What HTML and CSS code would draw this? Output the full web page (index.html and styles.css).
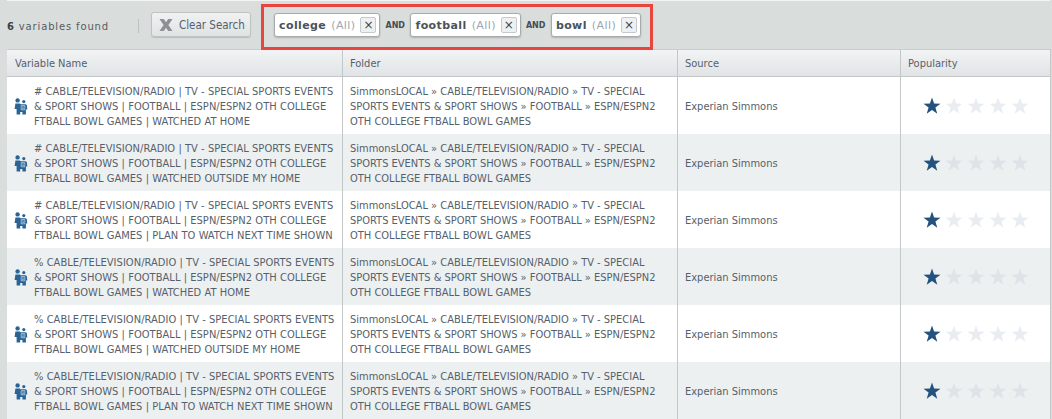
FILE: index.html
```html
<!DOCTYPE html>
<html lang="en">
<head>
<meta charset="utf-8">
<title>Variables</title>
<link rel="stylesheet" href="styles.css">
</head>
<body>
<div class="page">
  <div class="topline"></div>
  <div class="toolbar">
    <div class="count"><b>6</b> variables found</div>
    <div class="sep"></div>
    <button class="clear"><svg class="clear-x" viewBox="0 0 14 14" width="14" height="14"><path d="M.5 1h4.3L7 4.2 9.2 1h4.3L9.4 7l4.1 6H9.2L7 9.8 4.8 13H.5l4.1-6z"/></svg>Clear Search</button>
    <div class="terms">
      <div class="chip"><b>college</b><span class="all">(All)</span><span class="x">×</span></div>
      <span class="and">AND</span>
      <div class="chip"><b>football</b><span class="all">(All)</span><span class="x">×</span></div>
      <span class="and">AND</span>
      <div class="chip"><b>bowl</b><span class="all">(All)</span><span class="x">×</span></div>
    </div>
  </div>
  <div class="table">
    <div class="row head">
      <div class="cell">Variable Name</div><div class="cell">Folder</div><div class="cell">Source</div><div class="cell">Popularity</div>
    </div>
    <div class="row">
      <div class="cell name"><svg class="person" viewBox="0 0 14 17"><use href="#p"/></svg><span># CABLE/TELEVISION/RADIO | TV - SPECIAL SPORTS EVENTS &amp; SPORT SHOWS | FOOTBALL | ESPN/ESPN2 OTH COLLEGE FTBALL BOWL GAMES | WATCHED AT HOME</span></div>
      <div class="cell">SimmonsLOCAL » CABLE/TELEVISION/RADIO » TV - SPECIAL SPORTS EVENTS &amp; SPORT SHOWS » FOOTBALL » ESPN/ESPN2 OTH COLLEGE FTBALL BOWL GAMES</div>
      <div class="cell">Experian Simmons</div>
      <div class="cell stars"><svg viewBox="0 0 22 20" class="star on"><use href="#s"/></svg><svg viewBox="0 0 22 20" class="star"><use href="#s"/></svg><svg viewBox="0 0 22 20" class="star"><use href="#s"/></svg><svg viewBox="0 0 22 20" class="star"><use href="#s"/></svg><svg viewBox="0 0 22 20" class="star"><use href="#s"/></svg></div>
    </div>
    <div class="row">
      <div class="cell name"><svg class="person" viewBox="0 0 14 17"><use href="#p"/></svg><span># CABLE/TELEVISION/RADIO | TV - SPECIAL SPORTS EVENTS &amp; SPORT SHOWS | FOOTBALL | ESPN/ESPN2 OTH COLLEGE FTBALL BOWL GAMES | WATCHED OUTSIDE MY HOME</span></div>
      <div class="cell">SimmonsLOCAL » CABLE/TELEVISION/RADIO » TV - SPECIAL SPORTS EVENTS &amp; SPORT SHOWS » FOOTBALL » ESPN/ESPN2 OTH COLLEGE FTBALL BOWL GAMES</div>
      <div class="cell">Experian Simmons</div>
      <div class="cell stars"><svg viewBox="0 0 22 20" class="star on"><use href="#s"/></svg><svg viewBox="0 0 22 20" class="star"><use href="#s"/></svg><svg viewBox="0 0 22 20" class="star"><use href="#s"/></svg><svg viewBox="0 0 22 20" class="star"><use href="#s"/></svg><svg viewBox="0 0 22 20" class="star"><use href="#s"/></svg></div>
    </div>
    <div class="row">
      <div class="cell name"><svg class="person" viewBox="0 0 14 17"><use href="#p"/></svg><span># CABLE/TELEVISION/RADIO | TV - SPECIAL SPORTS EVENTS &amp; SPORT SHOWS | FOOTBALL | ESPN/ESPN2 OTH COLLEGE FTBALL BOWL GAMES | PLAN TO WATCH NEXT TIME SHOWN</span></div>
      <div class="cell">SimmonsLOCAL » CABLE/TELEVISION/RADIO » TV - SPECIAL SPORTS EVENTS &amp; SPORT SHOWS » FOOTBALL » ESPN/ESPN2 OTH COLLEGE FTBALL BOWL GAMES</div>
      <div class="cell">Experian Simmons</div>
      <div class="cell stars"><svg viewBox="0 0 22 20" class="star on"><use href="#s"/></svg><svg viewBox="0 0 22 20" class="star"><use href="#s"/></svg><svg viewBox="0 0 22 20" class="star"><use href="#s"/></svg><svg viewBox="0 0 22 20" class="star"><use href="#s"/></svg><svg viewBox="0 0 22 20" class="star"><use href="#s"/></svg></div>
    </div>
    <div class="row">
      <div class="cell name"><svg class="person" viewBox="0 0 14 17"><use href="#p"/></svg><span>% CABLE/TELEVISION/RADIO | TV - SPECIAL SPORTS EVENTS &amp; SPORT SHOWS | FOOTBALL | ESPN/ESPN2 OTH COLLEGE FTBALL BOWL GAMES | WATCHED AT HOME</span></div>
      <div class="cell">SimmonsLOCAL » CABLE/TELEVISION/RADIO » TV - SPECIAL SPORTS EVENTS &amp; SPORT SHOWS » FOOTBALL » ESPN/ESPN2 OTH COLLEGE FTBALL BOWL GAMES</div>
      <div class="cell">Experian Simmons</div>
      <div class="cell stars"><svg viewBox="0 0 22 20" class="star on"><use href="#s"/></svg><svg viewBox="0 0 22 20" class="star"><use href="#s"/></svg><svg viewBox="0 0 22 20" class="star"><use href="#s"/></svg><svg viewBox="0 0 22 20" class="star"><use href="#s"/></svg><svg viewBox="0 0 22 20" class="star"><use href="#s"/></svg></div>
    </div>
    <div class="row">
      <div class="cell name"><svg class="person" viewBox="0 0 14 17"><use href="#p"/></svg><span>% CABLE/TELEVISION/RADIO | TV - SPECIAL SPORTS EVENTS &amp; SPORT SHOWS | FOOTBALL | ESPN/ESPN2 OTH COLLEGE FTBALL BOWL GAMES | WATCHED OUTSIDE MY HOME</span></div>
      <div class="cell">SimmonsLOCAL » CABLE/TELEVISION/RADIO » TV - SPECIAL SPORTS EVENTS &amp; SPORT SHOWS » FOOTBALL » ESPN/ESPN2 OTH COLLEGE FTBALL BOWL GAMES</div>
      <div class="cell">Experian Simmons</div>
      <div class="cell stars"><svg viewBox="0 0 22 20" class="star on"><use href="#s"/></svg><svg viewBox="0 0 22 20" class="star"><use href="#s"/></svg><svg viewBox="0 0 22 20" class="star"><use href="#s"/></svg><svg viewBox="0 0 22 20" class="star"><use href="#s"/></svg><svg viewBox="0 0 22 20" class="star"><use href="#s"/></svg></div>
    </div>
    <div class="row">
      <div class="cell name"><svg class="person" viewBox="0 0 14 17"><use href="#p"/></svg><span>% CABLE/TELEVISION/RADIO | TV - SPECIAL SPORTS EVENTS &amp; SPORT SHOWS | FOOTBALL | ESPN/ESPN2 OTH COLLEGE FTBALL BOWL GAMES | PLAN TO WATCH NEXT TIME SHOWN</span></div>
      <div class="cell">SimmonsLOCAL » CABLE/TELEVISION/RADIO » TV - SPECIAL SPORTS EVENTS &amp; SPORT SHOWS » FOOTBALL » ESPN/ESPN2 OTH COLLEGE FTBALL BOWL GAMES</div>
      <div class="cell">Experian Simmons</div>
      <div class="cell stars"><svg viewBox="0 0 22 20" class="star on"><use href="#s"/></svg><svg viewBox="0 0 22 20" class="star"><use href="#s"/></svg><svg viewBox="0 0 22 20" class="star"><use href="#s"/></svg><svg viewBox="0 0 22 20" class="star"><use href="#s"/></svg><svg viewBox="0 0 22 20" class="star"><use href="#s"/></svg></div>
    </div>
  </div>
</div>
<svg class="defs" width="0" height="0"><defs>
  <g id="p"><circle cx="3.6" cy="2.4" r="2.2"/><circle cx="9.8" cy="3.6" r="1.6"/><path d="M1.4 5.4h4.4l.9.9h4.8l1.3.6.5 4.6h-1.4v5H8.4v-2.4H6.2v2.4H2.6v-5.5H.6z"/><path class="cut" d="M7.2 7.6h3.6v4.2H7.2zM8.2 9h1.6M8.2 10.4h1.6"/></g>
  <polygon id="s" points="11,1.5 13.1,7.6 19.5,7.7 14.4,11.6 16.3,17.8 11,14.1 5.7,17.8 7.6,11.6 2.5,7.7 8.9,7.6"/>
</defs></svg>
</body>
</html>
```
FILE: styles.css
```css
* { box-sizing: border-box; }
html, body { margin: 0; padding: 0; }
body { background: #d9dedd; font-family: "DejaVu Sans Condensed", "DejaVu Sans", sans-serif; font-size: 11px; color: #4a5157; overflow: hidden; }
.page { padding: 0 0 0 7px; }
.topline { height: 1px; margin-right: 2px; background: #f3f5f5; margin-bottom: 2px; }
.toolbar { height: 46px; display: flex; align-items: center; position: relative; }
.count { width: 131px; flex: none; font-family: "DejaVu Sans", sans-serif; font-size: 10px; letter-spacing: .85px; color: #555c60; }
.count b { color: #3c4246; }
.sep { width: 1px; height: 14px; background: #bcc2c2; margin-right: 12px; flex: none; }
.clear { flex: none; width: 100px; height: 25px; margin-bottom: 3px; display: flex; align-items: center; gap: 6px; padding: 0 7px; white-space: nowrap; border: 1px solid #bfc3c3; border-radius: 3px; background: linear-gradient(#f0f2f2, #e0e3e4); font: inherit; font-size: 11.5px; color: #555f6b; box-shadow: 0 1px 1px rgba(0,0,0,.15); }
.clear-x { fill: #8d9193; flex: none; }
.terms { position: absolute; left: 254px; top: 1px; width: 392px; height: 46px; border: 3px solid #e8453f; display: flex; align-items: center; padding: 0 0 4px 10px; gap: 5px; }
.chip { height: 24px; display: flex; align-items: center; gap: 5px; padding: 0 3px 0 4px; background: #fff; border: 1px solid #a6abad; border-radius: 3px; box-shadow: 0 1px 2px rgba(0,0,0,.2); color: #4b5359; font-family: "DejaVu Sans", sans-serif; font-size: 11px; letter-spacing: .4px; }
.all { color: #9aa7b4; font-weight: 400; }
.x { width: 16px; height: 16px; letter-spacing: 0; display: flex; align-items: center; justify-content: center; border: 1px solid #c6cacc; border-radius: 2px; background: #eef0f1; color: #3f464c; font-size: 12px; line-height: 1; }
.and { width: 20px; font-size: 8px; font-weight: 700; color: #454c52; font-family: "DejaVu Sans", sans-serif; }
.table { background: #fff; border-top: 1px solid #c9cccd; border-right: 1px solid #c4c7c8; margin-right: 1px; }
.row { display: grid; grid-template-columns: 336px 335px 223px 1fr; height: 57px; background: #fff; }
.row:nth-child(odd):not(.head) { background: #edf0f1; }
.row.head { height: 27px; background: linear-gradient(#f1f3f4, #e1e4e6); border-bottom: 1px solid #c4c7c8; }
.cell { display: flex; align-items: center; padding: 2px 7px 0 7px; line-height: 15px; border-right: 1px solid #c4c7c8; color: #56606a; }
.head .cell { padding-top: 1px; }
.head .cell:first-child { padding-left: 8px; }
.row .cell:last-child { border-right: 0; }
.name { gap: 6px; padding: 2px 0 0 8px; }
.name span { width: 303px; flex: none; letter-spacing: .05px; }
.person { width: 14px; height: 17px; flex: none; margin-left: -1px; fill: #2a6496; }
.cut { fill: none; stroke: #cfe0ee; stroke-width: .7; }
.stars { justify-content: center; padding: 0; }
.star { width: 22px; height: 20px; flex: none; fill: #e9edf1; }
.row:nth-child(odd) .star { fill: #dde3e7; }
.star.on, .row:nth-child(odd) .star.on { fill: #23527f; }
.defs { position: absolute; }
```
